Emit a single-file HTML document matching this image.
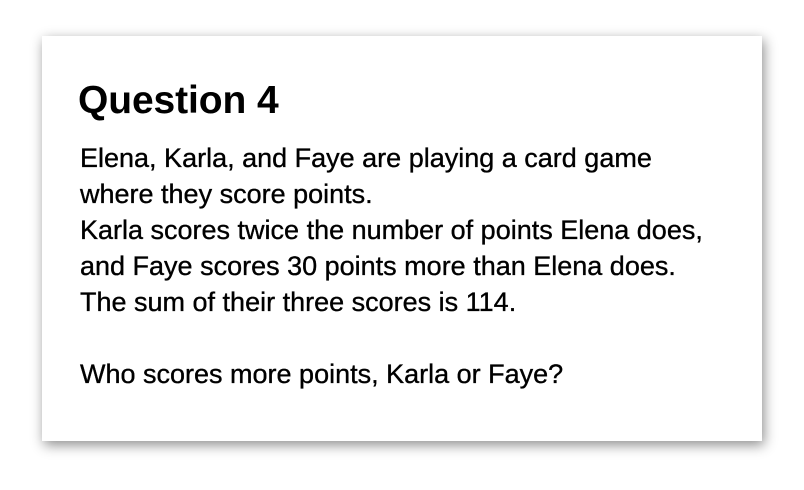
<!DOCTYPE html>
<html><head><style>
html,body{margin:0;padding:0;background:#fff;width:804px;height:490px;overflow:hidden}
.card{position:absolute;left:42px;top:36px;width:720px;height:405px;background:#fff;box-shadow:2px 4px 12px rgba(0,0,0,0.45)}
h1{position:absolute;left:36px;top:43px;margin:0;font:bold 39px/44px "Liberation Sans",sans-serif;letter-spacing:-0.1px;color:#000}
p{position:absolute;left:38px;top:104px;margin:0;font:27px/36px "Liberation Sans",sans-serif;color:#000;white-space:nowrap;-webkit-text-stroke:0.35px #000}
</style></head><body>
<div class="card">
<h1>Question 4</h1>
<p>Elena, Karla, and Faye are playing a card game<br>where they score points.<br>Karla scores twice the number of points Elena does,<br>and Faye scores 30 points more than Elena does.<br>The sum of their three scores is 114.<br><br>Who scores more points, Karla or Faye?</p>
</div>
</body></html>
